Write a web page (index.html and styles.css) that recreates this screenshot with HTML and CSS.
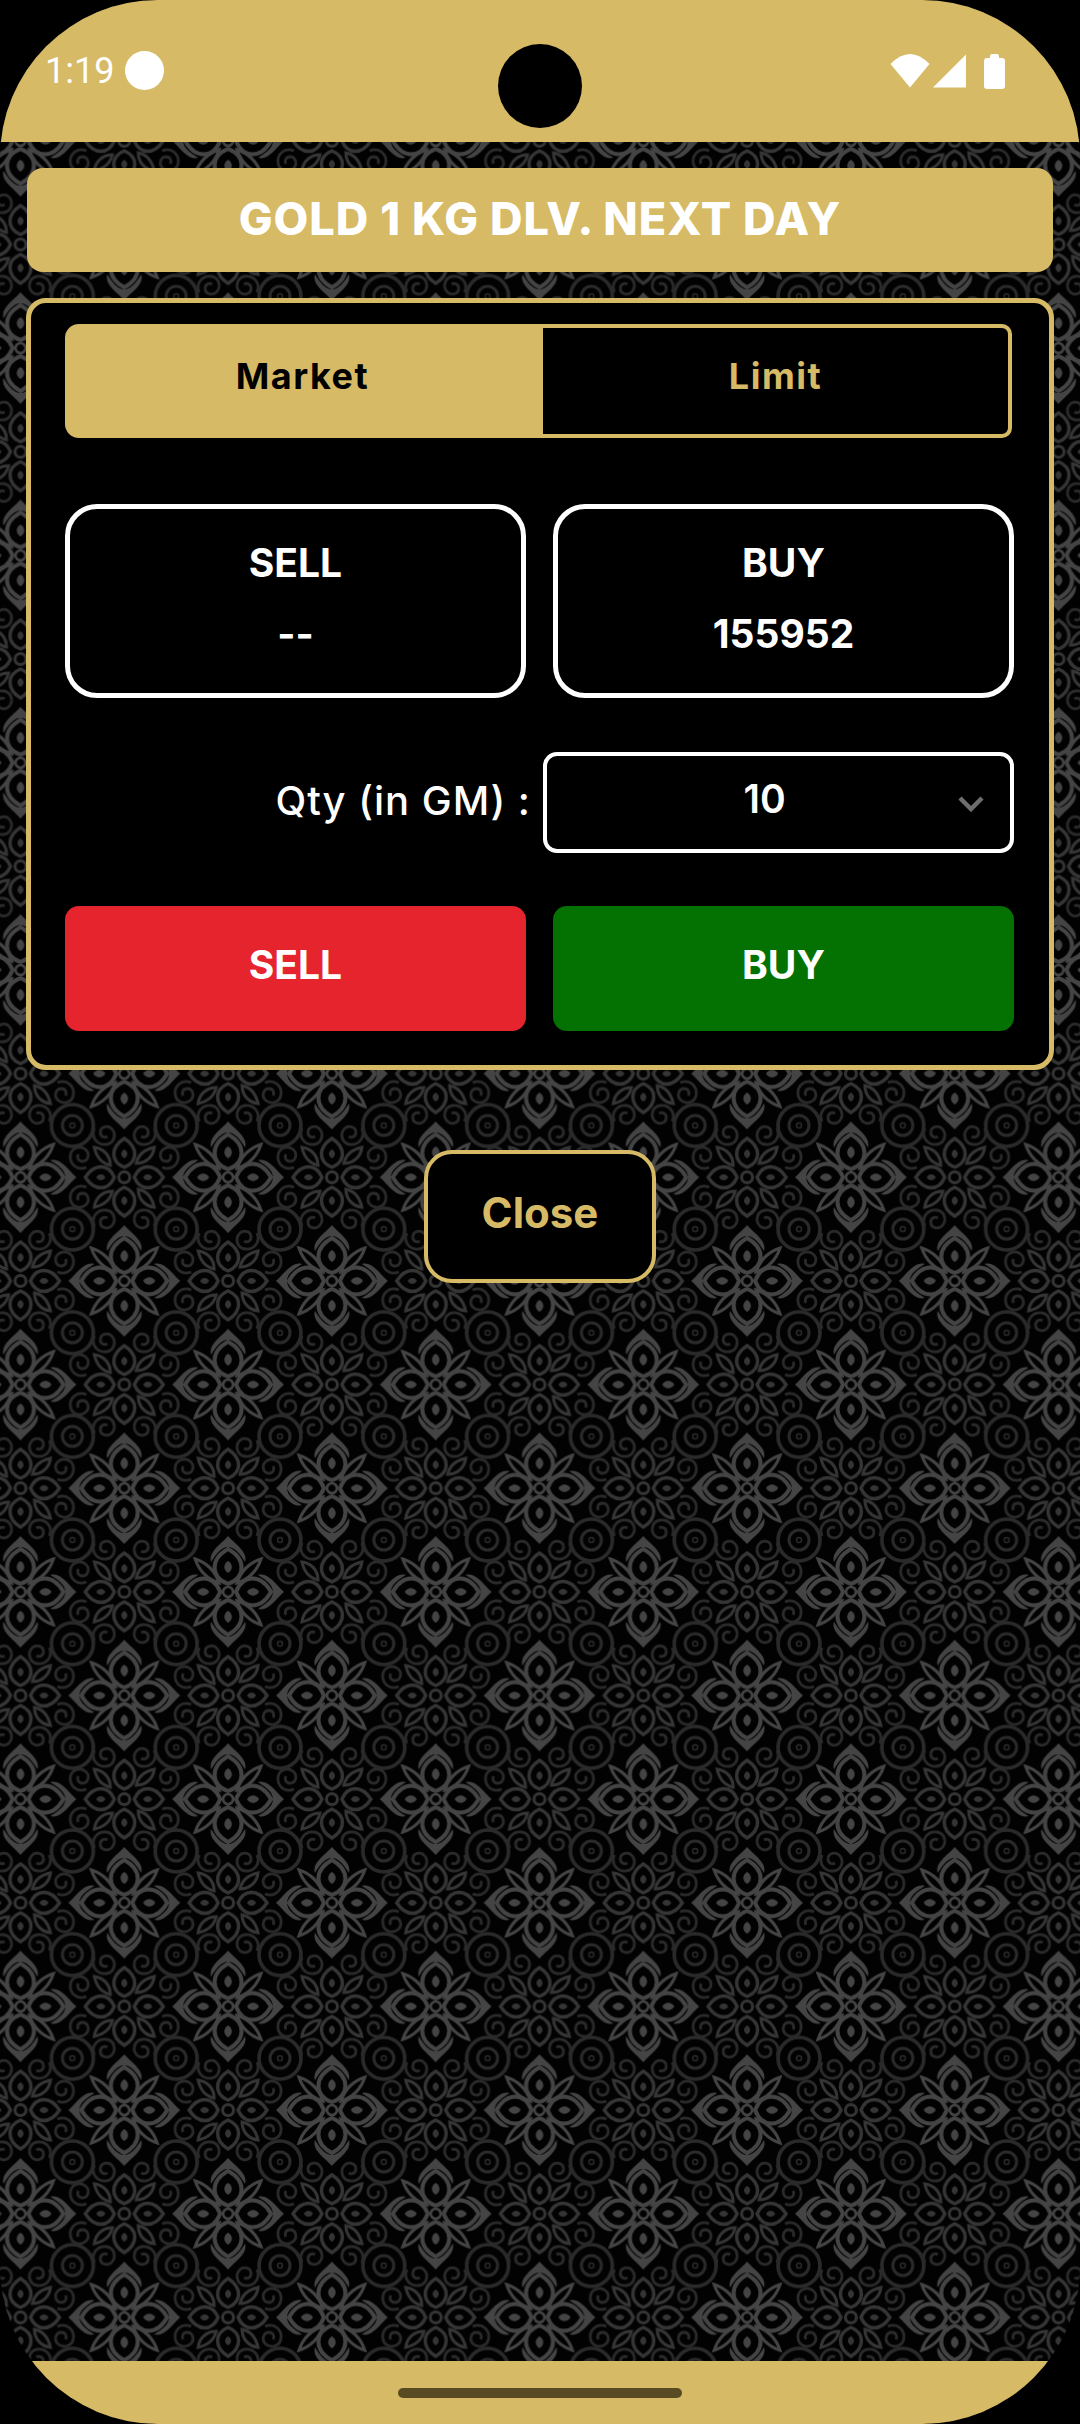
FILE: index.html
```html
<!DOCTYPE html>
<html lang="en">
<head>
    <meta charset="UTF-8">
    <title>Gold 1 Kg Dlv. Next Day</title>
    <meta name="viewport" content="width=device-width, initial-scale=1">
    <link rel="stylesheet" href="styles.css">
</head>
<body>
<div class="screen">

    <!-- damask wallpaper behind the whole page -->
    <svg class="wallpaper" width="1080" height="2424" aria-hidden="true">
        <defs>
            <g id="petal">
                <path d="M8 0C15 -18 33 -18 43 0C33 18 15 18 8 0Z" fill="none" stroke-width="4"/>
                <path d="M19 0C22 -5 28 -5 31 0C28 5 22 5 19 0Z" stroke="none"/>
            </g>
            <path id="crown" d="M30 -17C40 -20 47 -8 56 0C47 8 40 20 30 17C38 12 45 7 45 0C45 -7 38 -12 30 -17Z" stroke="none"/>
            <path id="leaf" d="M9 -9C13 -21 21 -29 33 -33C29 -21 21 -13 9 -9Z" fill="none" stroke-width="3"/>
            <g id="bigflower" class="big">
                <circle r="5" fill="none" stroke-width="2.6"/>
                <use href="#petal"/>
                <use href="#petal" transform="rotate(90)"/>
                <use href="#petal" transform="rotate(180)"/>
                <use href="#petal" transform="rotate(270)"/>
                <use href="#crown"/>
                <use href="#crown" transform="rotate(90)"/>
                <use href="#crown" transform="rotate(180)"/>
                <use href="#crown" transform="rotate(270)"/>
                <use href="#leaf"/>
                <use href="#leaf" transform="rotate(90)"/>
                <use href="#leaf" transform="rotate(180)"/>
                <use href="#leaf" transform="rotate(270)"/>
            </g>
            <g id="smallpetal">
                <path d="M10 0C16 -14 30 -14 39 0C30 14 16 14 10 0Z" fill="none" stroke-width="3.4"/>
                <path d="M19 0C21 -4 26 -4 28 0C26 4 21 4 19 0Z" stroke="none"/>
                <path d="M12 -14C14 -23 21 -28 30 -30C29 -21 22 -14 12 -14Z" fill="none" stroke-width="3"/>
            </g>
            <g id="smallflower" class="small">
                <circle r="5.5" fill="none" stroke-width="3"/>
                <use href="#smallpetal"/>
                <use href="#smallpetal" transform="rotate(90)"/>
                <use href="#smallpetal" transform="rotate(180)"/>
                <use href="#smallpetal" transform="rotate(270)"/>
            </g>
            <path id="spiral" d="M-10 6C-14 -4 -6 -11 2 -10C10 -9 12 0 8 5C4 10 -4 8 -4 2C-4 -2 0 -4 3 -2" fill="none" stroke-width="2.8"/>
            <g id="rosette" class="ring">
                <circle r="21" fill="none" stroke-width="3.6"/>
                <circle r="10" fill="none" stroke-width="3"/>
                <circle r="2.5" fill="none" stroke-width="1.4"/>
                <use href="#spiral" transform="translate(33 -10)"/>
                <use href="#spiral" transform="translate(-32 9) rotate(180)"/>
                <use href="#spiral" transform="translate(9 -33) rotate(90) scale(1 -1)"/>
                <use href="#spiral" transform="translate(-8 32) rotate(-90) scale(1 -1)"/>
            </g>
            <pattern id="damask" width="208" height="208" patternUnits="userSpaceOnUse"
                     patternTransform="translate(20.5 970) scale(0.9981 0.9966)">
                <use href="#rosette" transform="translate(156 156)"/>
                <use href="#rosette" transform="translate(52 156) scale(-1 1)"/>
                <use href="#rosette" transform="translate(156 52) scale(1 -1)"/>
                <use href="#rosette" transform="translate(52 52) scale(-1 -1)"/>
                <use href="#smallflower" x="104"/>
                <use href="#smallflower" y="104"/>
                <use href="#smallflower" x="208" y="104"/>
                <use href="#smallflower" x="104" y="208"/>
                <use href="#bigflower"/>
                <use href="#bigflower" x="208"/>
                <use href="#bigflower" y="208"/>
                <use href="#bigflower" x="208" y="208"/>
                <use href="#bigflower" x="104" y="104"/>
            </pattern>
        </defs>
        <rect width="1080" height="2424" fill="url(#damask)"/>
    </svg>

    <div class="status-bar">
        <div class="status-left">
            <span class="clock">1:19</span>
            <span class="status-dot"></span>
        </div>
        <div class="camera"></div>
        <div class="status-icons">
            <svg class="icon-wifi" width="40" height="34" viewBox="0 0 40 34"><path d="M0.5 10Q20 -10 39.5 10L20 33.5Z" fill="#fff"/></svg>
            <svg class="icon-signal" width="33" height="34" viewBox="0 0 33 34"><path d="M33 0.5V33.5H0Z" fill="#fff"/></svg>
            <svg class="icon-battery" width="21" height="35" viewBox="0 0 21 35"><path d="M6 2Q6 0 8 0H13Q15 0 15 2V4H18Q21 4 21 7V32Q21 35 18 35H3Q0 35 0 32V7Q0 4 3 4H6Z" fill="#fff"/></svg>
        </div>
    </div>

    <main class="content">
        <h1 class="title">GOLD 1 KG DLV. NEXT DAY</h1>

        <section class="panel">
            <div class="tabs">
                <div class="tab tab-active">Market</div>
                <div class="tab tab-idle">Limit</div>
            </div>

            <div class="quotes">
                <div class="quote">
                    <div>SELL</div>
                    <div>--</div>
                </div>
                <div class="quote">
                    <div>BUY</div>
                    <div>155952</div>
                </div>
            </div>

            <div class="qty-row">
                <span class="qty-label">Qty (in GM) :</span>
                <div class="qty-select">
                    <span class="qty-value">10</span>
                    <svg class="qty-arrow" width="26" height="16" viewBox="0 0 26 16"><path d="M2 2L13 13L24 2" fill="none" stroke="#6e6e6e" stroke-width="4.5"/></svg>
                </div>
            </div>

            <div class="actions">
                <button class="action-btn sell-btn">SELL</button>
                <button class="action-btn buy-btn">BUY</button>
            </div>
        </section>

        <button class="close-btn">Close</button>
    </main>

    <div class="nav-bar">
        <div class="nav-handle"></div>
    </div>
</div>
</body>
</html>
```

FILE: styles.css
```css
* {
    box-sizing: border-box;
}

html, body {
    margin: 0;
    padding: 0;
    background: #000;
}

body {
    font-family: 'Inter', 'Liberation Sans', sans-serif;
    color: #fff;
}

.screen {
    position: relative;
    display: flex;
    flex-direction: column;
    width: 1080px;
    height: 2424px;
    background: #020202;
    border-radius: 158px;
    overflow: hidden;
}

.wallpaper {
    position: absolute;
    top: 0;
    left: 0;
}

.big {
    fill: #444;
    stroke: #444;
}

.small {
    fill: #353535;
    stroke: #353535;
}

.ring {
    fill: #2a2a2a;
    stroke: #2a2a2a;
}

/* status bar */
.status-bar {
    position: relative;
    display: grid;
    grid-template-columns: 1fr auto 1fr;
    height: 142px;
    padding: 0 45px;
    background: #d6ba65;
}

.status-left {
    display: flex;
    align-items: center;
    gap: 11px;
    height: 39px;
    margin-top: 51px;
}

.clock {
    font-family: 'Roboto', sans-serif;
    font-size: 36px;
    letter-spacing: 0;
}

.status-dot {
    width: 39px;
    height: 39px;
    border-radius: 50%;
    background: #fff;
}

.camera {
    width: 84px;
    height: 84px;
    margin-top: 44px;
    border-radius: 50%;
    background: #000;
}

.status-icons {
    display: flex;
    justify-content: flex-end;
    align-items: flex-start;
    margin-top: 54px;
    margin-right: 30px;
}

.icon-signal {
    margin-left: 3px;
}

.icon-battery {
    margin-left: 18px;
}

/* page body */
.content {
    position: relative;
    display: flex;
    flex-direction: column;
    align-items: center;
    flex: 1;
    padding: 26px 26px 0;
}

.title {
    width: 1026px;
    height: 104px;
    margin: 0;
    background: #d6ba65;
    border-radius: 16px;
    color: #fff;
    font-size: 45px;
    font-weight: 800;
    letter-spacing: 1px;
    line-height: 102px;
    text-align: center;
}

.panel {
    width: 1028px;
    margin-top: 26px;
    padding: 21px 35px 34px 34px;
    background: #000;
    border: 5px solid #d6ba65;
    border-radius: 20px;
}

.tabs {
    display: flex;
    height: 114px;
    margin-right: 2px;
    font-size: 36px;
    font-weight: 700;
    letter-spacing: 1.5px;
}

.tab {
    display: flex;
    align-items: center;
    justify-content: center;
    padding-bottom: 10px;
}

.tab-active {
    width: 475px;
    background: #d6ba65;
    border-radius: 14px 0 0 14px;
    color: #000;
}

.tab-idle {
    flex: 1;
    border: 4px solid #d6ba65;
    border-left-width: 3px;
    border-radius: 0 10px 10px 0;
    color: #d6ba65;
}

.quotes {
    display: flex;
    gap: 27px;
    margin-top: 66px;
}

.quote {
    flex: 1;
    height: 194px;
    padding-top: 18px;
    border: 5px solid #fff;
    border-radius: 32px;
    font-size: 39px;
    font-weight: 700;
    line-height: 71px;
    text-align: center;
}

.qty-row {
    display: flex;
    justify-content: flex-end;
    align-items: center;
    gap: 12px;
    margin-top: 54px;
}

.qty-label {
    padding-bottom: 5px;
    font-size: 40px;
    font-weight: 500;
    letter-spacing: 1px;
}

.qty-select {
    position: relative;
    width: 471px;
    height: 101px;
    padding-right: 28px;
    border: 4px solid #fff;
    border-radius: 14px;
    font-size: 39px;
    font-weight: 600;
    line-height: 86px;
    text-align: center;
}

.qty-arrow {
    position: absolute;
    top: 40px;
    right: 26px;
}

.actions {
    display: flex;
    gap: 27px;
    margin-top: 53px;
}

.action-btn {
    flex: 1;
    height: 125px;
    padding: 0 0 8px;
    border: none;
    border-radius: 14px;
    color: #fff;
    font-family: inherit;
    font-size: 39px;
    font-weight: 700;
}

.sell-btn {
    background: #e6242e;
}

.buy-btn {
    background: #037203;
}

.close-btn {
    width: 232px;
    height: 133px;
    margin-top: 80px;
    padding: 0 0 8px;
    background: #000;
    border: 4px solid #d6ba65;
    border-radius: 28px;
    color: #d6ba65;
    font-family: inherit;
    font-size: 42px;
    font-weight: 700;
}

/* gesture bar */
.nav-bar {
    position: relative;
    display: flex;
    justify-content: center;
    height: 63px;
    padding-top: 27px;
    background: #d6ba65;
}

.nav-handle {
    width: 284px;
    height: 10px;
    border-radius: 5px;
    background: #584b23;
}
```
